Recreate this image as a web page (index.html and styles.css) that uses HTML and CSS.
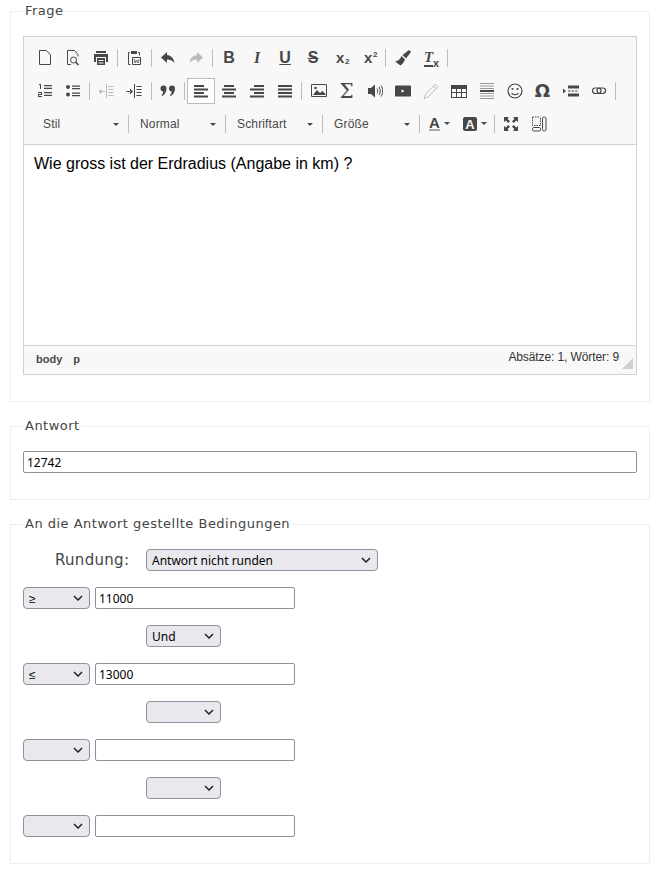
FILE: index.html
```html
<!doctype html>
<html>
<head>
<meta charset="utf-8">
<title>Frage bearbeiten</title>
<link rel="stylesheet" href="styles.css">
</head>
<body>
<svg class="sprite" xmlns="http://www.w3.org/2000/svg">
  <symbol id="i-new" viewBox="0 0 16 16"><path d="M2.5.5h7l4 4.5v9.500h-11z" fill="none" stroke="currentColor"/></symbol>
  <symbol id="i-preview" viewBox="0 0 16 16"><path d="M6 14.500H2.500V.5h7l3.500 4v2" fill="none" stroke="currentColor"/><circle cx="8.500" cy="10" r="3" fill="none" stroke="currentColor"/><path d="M10.500 12l3 3" stroke="currentColor" stroke-width="1.600"/></symbol>
  <symbol id="i-print" viewBox="0 0 16 16"><path d="M3 1h10v2H3zM1 4h14v8h-2V7H3v5H1z"/><path d="M4 8h8v7H4zM5.500 10v1h5v-1zM5.500 12.500v1h5v-1z" fill-rule="evenodd"/></symbol>
  <symbol id="i-paste" viewBox="0 0 16 16"><path d="M4 2.500H2.500v12h2M12 2.500h1.500v3" fill="none" stroke="currentColor"/><path d="M5 1h6v3H5z"/><path d="M6.500 7.500h8v7h-8z" fill="none" stroke="currentColor"/><path d="M8 9l1 4 1.500-3 1.500 3 1-4" fill="none" stroke="currentColor" stroke-width=".8"/></symbol>
  <symbol id="i-undo" viewBox="0 0 16 16"><path d="M7 2L1 7.500 7 13V9.500c3 0 5.500 1 7.500 3.500C14 8.500 11 5.500 7 5z"/></symbol>
  <symbol id="i-redo" viewBox="0 0 16 16"><path d="M9 2l6 5.500L9 13V9.500c-3 0-5.500 1-7.500 3.500C2 8.500 5 5.500 9 5z"/></symbol>
  <symbol id="i-brush" viewBox="0 0 16 16"><path d="M14 0l2 2-5 6.500L7.500 5z"/><path d="M6.500 6l3.500 3.500c-1 3-3 5-4.500 6L0 11.500c3 0 5-2.500 6.500-5.500z"/></symbol>
  <symbol id="i-numlist" viewBox="0 0 16 16"><path d="M2 1h2v5H3V2H2zM1 9h4v3H2v1h3v1H1v-3h3v-1H1zM7 2h8v1.300H7zM7 4.700h8V6H7zM7 9h8v1.300H7zM7 11.700h8V13H7z"/></symbol>
  <symbol id="i-bullist" viewBox="0 0 16 16"><circle cx="3" cy="4" r="2"/><circle cx="3" cy="11.500" r="2"/><path d="M7 2.500h8v1.300H7zM7 5h8v1.300H7zM7 9.500h8v1.300H7zM7 12h8v1.300H7z"/></symbol>
  <symbol id="i-outdent" viewBox="0 0 16 16"><path d="M8 1h1v14H8zM10.500 3h5v1h-5zM10.500 6h5v1h-5zM10.500 9h5v1h-5zM10.500 12h5v1h-5zM1.500 8h5.500v1H1.500zM3.500 5.500v6L.5 8.500z"/></symbol>
  <symbol id="i-indent" viewBox="0 0 16 16"><path d="M8 1h1v14H8zM10.500 3h5v1h-5zM10.500 6h5v1h-5zM10.500 9h5v1h-5zM10.500 12h5v1h-5zM.5 8h4v1h-4zM4 5.500v6l3-3z"/></symbol>
  <symbol id="i-quote" viewBox="0 0 16 16"><path d="M.5 5.500a3 3 0 1 1 6 0c0 3.500-2 6.500-4.500 7.500l-.5-1c1-.8 1.500-1.600 1.700-3.500A3 3 0 0 1 .5 5.500zM9 5.500a3 3 0 1 1 6 0c0 3.500-2 6.500-4.500 7.500l-.5-1c1-.8 1.500-1.600 1.700-3.500A3 3 0 0 1 9 5.500z"/></symbol>
  <symbol id="i-left" viewBox="0 0 16 16"><path d="M1 2h10v2H1zM1 5.500h14v2H1zM1 9h10v2H1zM1 12.500h14v2H1z"/></symbol>
  <symbol id="i-center" viewBox="0 0 16 16"><path d="M3 2h10v2H3zM1 5.500h14v2H1zM3 9h10v2H3zM1 12.500h14v2H1z"/></symbol>
  <symbol id="i-right" viewBox="0 0 16 16"><path d="M5 2h10v2H5zM1 5.500h14v2H1zM5 9h10v2H5zM1 12.500h14v2H1z"/></symbol>
  <symbol id="i-justify" viewBox="0 0 16 16"><path d="M1 2h14v2H1zM1 5.500h14v2H1zM1 9h14v2H1zM1 12.500h14v2H1z"/></symbol>
  <symbol id="i-image" viewBox="0 0 16 16"><path d="M.5 1.500h15v12H.5z" fill="none" stroke="currentColor"/><path d="M2 12l4-5 3 3 2.500-2 3 3v1z"/><circle cx="4.500" cy="5" r="1.300"/></symbol>
  <symbol id="i-audio" viewBox="0 0 16 16"><path d="M1 5h3l4-3.500v13L4 11H1z"/><path d="M10 5.500c1 1.500 1 3.500 0 5M12 4c1.700 2.500 1.700 5.500 0 8M14 2.500c2.300 3.500 2.300 7.500 0 11" fill="none" stroke="currentColor"/></symbol>
  <symbol id="i-video" viewBox="0 0 16 16"><rect x="-2" y="2.500" width="20" height="11" rx="3.500"/><path d="M6.500 6.300v3.400L9.500 8z" fill="#f8f8f8"/></symbol>
  <symbol id="i-pencil" viewBox="0 0 16 16"><path d="M12.500 1L15 3.500 5 14l-4 1.500L2.300 11.500zM10.500 3l2.500 2.500" fill="none" stroke="currentColor"/></symbol>
  <symbol id="i-table" viewBox="0 0 16 16"><path d="M0 2h16v13H0zM1 6v3h4V6zm5 0v3h4V6zm5 0v3h4V6zM1 10v4h4v-4zm5 0v4h4v-4zm5 0v4h4v-4z" fill-rule="evenodd"/></symbol>
  <symbol id="i-hr" viewBox="0 0 16 16"><path d="M1 0h14v1H1zM1 2.500h14v1H1zM1 5h14v1H1zM1 10h14v1H1zM1 12.500h14v1H1zM1 15h14v1H1z" fill="#999"/><path d="M1 7h14v2H1z"/></symbol>
  <symbol id="i-smiley" viewBox="0 0 16 16"><circle cx="8" cy="8" r="7" fill="none" stroke="currentColor" stroke-width="1.200"/><circle cx="5.500" cy="6" r="1.100"/><circle cx="10.500" cy="6" r="1.100"/><path d="M4.500 10c1.500 2.300 5.500 2.300 7 0" fill="none" stroke="currentColor" stroke-width="1.200"/></symbol>
  <symbol id="i-pagebreak" viewBox="0 0 16 16"><path d="M0 5.500v5L3 8zM5 2.500h11v3H5zM5 10.500h11v3H5zM5 7.500h2.500v1H5zM8.500 7.500H11v1H8.500zM12 7.500h2.500v1H12z"/></symbol>
  <symbol id="i-link" viewBox="0 0 16 16"><rect x="1.500" y="5" width="8.500" height="5.500" rx="2.700" fill="none" stroke="currentColor" stroke-width="1.200"/><rect x="6" y="5" width="8.500" height="5.500" rx="2.700" fill="none" stroke="currentColor" stroke-width="1.200"/></symbol>
  <symbol id="i-maximize" viewBox="0 0 16 16"><path d="M1 1h5L4.500 2.800 7 5.300 5.300 7 2.800 4.500 1 6zM15 1v5l-1.800-1.500L10.700 7 9 5.300l2.500-2.500L10 1zM1 15v-5l1.800 1.500L5.300 9 7 10.700l-2.500 2.500L6 15zM15 15h-5l1.500-1.800L9 10.700 10.700 9l2.500 2.500L15 10z"/></symbol>
  <symbol id="i-blocks" viewBox="0 0 16 16"><path d="M1.500 1v8.500h8V1" fill="none" stroke="currentColor" stroke-dasharray="1.500 1"/><path d="M1.500 1h8" stroke="currentColor" stroke-dasharray="1.500 1"/><rect x="1.500" y="11.500" width="8" height="3.500" rx="1.200" fill="none" stroke="currentColor"/><rect x="11.500" y="1" width="3.500" height="14" rx="1.500" fill="none" stroke="currentColor"/></symbol>
</svg>

<fieldset class="box">
  <legend>Frage</legend>
  <div class="editor">
    <div class="toolbar">
      <div class="tb-row">
        <a class="btn"><svg class="ico"><use href="#i-new"/></svg></a>
        <a class="btn"><svg class="ico"><use href="#i-preview"/></svg></a>
        <a class="btn"><svg class="ico"><use href="#i-print"/></svg></a>
        <span class="sep"></span>
        <a class="btn"><svg class="ico"><use href="#i-paste"/></svg></a>
        <span class="sep"></span>
        <a class="btn"><svg class="ico"><use href="#i-undo"/></svg></a>
        <a class="btn off"><svg class="ico"><use href="#i-redo"/></svg></a>
        <span class="sep"></span>
        <a class="btn"><span class="glyph bold">B</span></a>
        <a class="btn"><span class="glyph italic">I</span></a>
        <a class="btn"><span class="glyph under">U</span></a>
        <a class="btn"><span class="glyph strike">S</span></a>
        <a class="btn"><span class="glyph script">x<small class="low">2</small></span></a>
        <a class="btn"><span class="glyph script">x<small class="high">2</small></span></a>
        <span class="sep"></span>
        <a class="btn"><svg class="ico"><use href="#i-brush"/></svg></a>
        <a class="btn"><span class="glyph clear">T<small>x</small></span></a>
        <span class="sep"></span>
      </div>
      <div class="tb-row">
        <a class="btn"><svg class="ico"><use href="#i-numlist"/></svg></a>
        <a class="btn"><svg class="ico"><use href="#i-bullist"/></svg></a>
        <span class="sep"></span>
        <a class="btn off"><svg class="ico"><use href="#i-outdent"/></svg></a>
        <a class="btn"><svg class="ico"><use href="#i-indent"/></svg></a>
        <span class="sep"></span>
        <a class="btn"><svg class="ico"><use href="#i-quote"/></svg></a>
        <span class="sep"></span>
        <a class="btn on"><svg class="ico"><use href="#i-left"/></svg></a>
        <a class="btn"><svg class="ico"><use href="#i-center"/></svg></a>
        <a class="btn"><svg class="ico"><use href="#i-right"/></svg></a>
        <a class="btn"><svg class="ico"><use href="#i-justify"/></svg></a>
        <span class="sep"></span>
        <a class="btn"><svg class="ico"><use href="#i-image"/></svg></a>
        <a class="btn"><span class="glyph sigma">Σ</span></a>
        <a class="btn"><svg class="ico"><use href="#i-audio"/></svg></a>
        <a class="btn"><svg class="ico"><use href="#i-video"/></svg></a>
        <a class="btn off"><svg class="ico"><use href="#i-pencil"/></svg></a>
        <a class="btn"><svg class="ico"><use href="#i-table"/></svg></a>
        <a class="btn"><svg class="ico"><use href="#i-hr"/></svg></a>
        <a class="btn"><svg class="ico"><use href="#i-smiley"/></svg></a>
        <a class="btn"><span class="glyph omega">Ω</span></a>
        <a class="btn"><svg class="ico"><use href="#i-pagebreak"/></svg></a>
        <a class="btn"><svg class="ico"><use href="#i-link"/></svg></a>
        <span class="sep"></span>
      </div>
      <div class="tb-row combos">
        <a class="combo">Stil<span class="caret"></span></a>
        <span class="sep"></span>
        <a class="combo">Normal<span class="caret"></span></a>
        <span class="sep"></span>
        <a class="combo">Schriftart<span class="caret"></span></a>
        <span class="sep"></span>
        <a class="combo">Größe<span class="caret"></span></a>
        <span class="sep"></span>
        <a class="btn color"><span class="glyph text-color">A</span><span class="caret"></span></a>
        <a class="btn color bg"><span class="glyph bg-color">A</span><span class="caret"></span></a>
        <span class="sep last"></span>
        <a class="btn"><svg class="ico"><use href="#i-maximize"/></svg></a>
        <a class="btn"><svg class="ico"><use href="#i-blocks"/></svg></a>
      </div>
    </div>
    <div class="content">Wie gross ist der Erdradius (Angabe in km) ?</div>
    <div class="status">
      <span class="path"><b>body</b><b>p</b></span>
      <span class="count">Absätze: 1, Wörter: 9</span>
      <span class="resize"></span>
    </div>
  </div>
</fieldset>

<fieldset class="box">
  <legend>Antwort</legend>
  <input class="field wide" type="text" value="12742">
</fieldset>

<fieldset class="box">
  <legend>An die Antwort gestellte Bedingungen</legend>
  <div class="conds">
    <div class="cond-row">
      <label class="round-label">Rundung:</label>
      <select class="pick round"><option>Antwort nicht runden</option></select>
    </div>
    <div class="cond-row">
      <select class="pick op"><option>≥</option></select>
      <input class="field val" type="text" value="11000">
    </div>
    <div class="cond-row link-row">
      <select class="pick join"><option>Und</option></select>
    </div>
    <div class="cond-row">
      <select class="pick op"><option>≤</option></select>
      <input class="field val" type="text" value="13000">
    </div>
    <div class="cond-row link-row">
      <select class="pick join"><option></option></select>
    </div>
    <div class="cond-row">
      <select class="pick op"><option></option></select>
      <input class="field val" type="text">
    </div>
    <div class="cond-row link-row">
      <select class="pick join"><option></option></select>
    </div>
    <div class="cond-row">
      <select class="pick op"><option></option></select>
      <input class="field val" type="text">
    </div>
  </div>
</fieldset>
</body>
</html>
```

FILE: styles.css
```css
body {
	margin: 1px 10px 0;
	background: #fff;
	font-family: "Noto Sans", sans-serif;
	color: #000;
}
.sprite {
	position: absolute;
	width: 0;
	height: 0;
}
.box {
	margin: 0 0 14px;
	padding: 15px 12px 26px;
	border: 1px solid #eee;
}
.box legend {
	padding: 0 2px;
	font-family: "DejaVu Sans", sans-serif;
	font-size: 13px;
	line-height: 20px;
	letter-spacing: 0.49px;
	color: #444;
}

/* editor */
.editor {
	border: 1px solid #d1d1d1;
	font-family: "Liberation Sans", sans-serif;
}
.toolbar {
	padding: 4px 7px;
	height: 99px;
	background: #f8f8f8;
	border-bottom: 1px solid #d1d1d1;
}
.tb-row {
	display: flex;
	align-items: center;
	height: 33px;
	color: #474747;
}
.btn {
	display: flex;
	align-items: center;
	justify-content: center;
	box-sizing: border-box;
	width: 28px;
	height: 26px;
	flex: none;
}
.btn.off {
	color: #bbb;
}
.btn.on {
	background: #fff;
	border: 1px solid #bcbcbc;
}
.ico {
	width: 16px;
	height: 16px;
	fill: currentColor;
	overflow: visible;
}
.sep {
	flex: none;
	width: 1px;
	height: 18px;
	margin: 0 2.2px;
	background: #bcbcbc;
}
.glyph {
	font-size: 16px;
	font-weight: bold;
	line-height: 16px;
}
.glyph.italic {
	font-family: "Liberation Serif", serif;
	font-style: italic;
}
.glyph.under {
	text-decoration: underline;
}
.glyph.strike {
	text-decoration: line-through;
}
.glyph.script {
	font-size: 15px;
	position: relative;
	left: -1px;
}
.glyph.script small {
	position: absolute;
	left: 9px;
	font-size: 8px;
	line-height: 8px;
}
.glyph.script .low {
	bottom: 0;
}
.glyph.script .high {
	top: 1px;
}
.glyph.clear {
	position: relative;
	left: -2px;
	font-family: "Liberation Serif", serif;
	font-style: italic;
	font-size: 15px;
	border-bottom: 2px solid #474747;
}
.glyph.clear small {
	position: absolute;
	left: 9px;
	bottom: -3px;
	font-family: "Liberation Sans", sans-serif;
	font-style: normal;
	font-size: 11px;
	line-height: 10px;
}
.glyph.sigma {
	font-size: 20px;
	font-weight: normal;
	font-family: "DejaVu Serif", serif;
}
.glyph.omega {
	font-size: 18px;
	font-family: "DejaVu Sans", sans-serif;
}
.combos {
	padding-left: 1px;
}
.combos .sep {
	margin: 0;
}
.combos .sep.last {
	margin-right: 2px;
}
.combo {
	display: flex;
	align-items: center;
	flex: none;
	box-sizing: border-box;
	position: relative;
	width: 96px;
	height: 26px;
	padding-left: 11px;
	font-size: 12px;
	letter-spacing: 0.15px;
	color: #484848;
}
.caret {
	width: 0;
	height: 0;
	border-left: 3px solid transparent;
	border-right: 3px solid transparent;
	border-top: 3px solid #474747;
}
.combo .caret {
	position: absolute;
	right: 9px;
	top: 12px;
}
.btn.color {
	justify-content: flex-start;
	gap: 4px;
	width: 34px;
	padding-left: 9px;
}
.btn.color.bg {
	width: 40px;
}
.text-color {
	font-size: 15px;
	border-bottom: 2px solid #aaa;
	line-height: 13px;
}
.bg-color {
	width: 14px;
	height: 14px;
	font-size: 13px;
	line-height: 15px;
	text-align: center;
	border-radius: 2px;
	background: #474747;
	color: #f8f8f8;
}
.content {
	height: 180px;
	padding: 10px;
	font-size: 16px;
	line-height: 18px;
}
.status {
	display: flex;
	justify-content: space-between;
	position: relative;
	box-sizing: border-box;
	height: 29px;
	padding: 0 17px 0 12px;
	background: #f8f8f8;
	border-top: 1px solid #d1d1d1;
	color: #484848;
}
.path {
	padding-top: 6px;
	font-size: 11px;
	line-height: 14px;
}
.path b {
	margin-right: 11px;
}
.count {
	padding-top: 4px;
	font-size: 12px;
	line-height: 14px;
	letter-spacing: -0.1px;
	color: #333;
}
.resize {
	position: absolute;
	right: 3px;
	bottom: 5px;
	width: 0;
	height: 0;
	border-left: 11px solid transparent;
	border-bottom: 11px solid #cfcfcf;
}

/* form fields */
.field, .pick {
	box-sizing: border-box;
	height: 22px;
	font-family: "Noto Sans", sans-serif;
	font-size: 12px;
	color: #000;
}
.field {
	padding: 0 3px;
	background: #fff;
	border: 1px solid #8f8f9d;
	border-radius: 2px;
}
.field.wide {
	display: block;
	width: 100%;
}
.field.val {
	width: 200px;
}
.pick {
	appearance: none;
	padding: 0 20px 0 5px;
	border: 1px solid #8f8f9d;
	border-radius: 4px;
	background: #e9e9ed url("data:image/svg+xml,%3Csvg xmlns='http://www.w3.org/2000/svg' width='10' height='6'%3E%3Cpath d='M1 1l4 4 4-4' fill='none' stroke='%23222' stroke-width='1.500'/%3E%3C/svg%3E") no-repeat right 6px center;
}
.pick.round {
	width: 232px;
}
.pick.op {
	width: 67px;
}
.pick.join {
	width: 75px;
}
.conds {
	display: flex;
	flex-direction: column;
	gap: 16px;
}
.cond-row {
	display: flex;
	align-items: center;
	gap: 5px;
	height: 22px;
}
.link-row {
	padding-left: 123px;
}
.round-label {
	width: 86px;
	margin-left: 32px;
	font-family: "DejaVu Sans", sans-serif;
	font-size: 15px;
	letter-spacing: 0.3px;
	color: #444;
}
```
